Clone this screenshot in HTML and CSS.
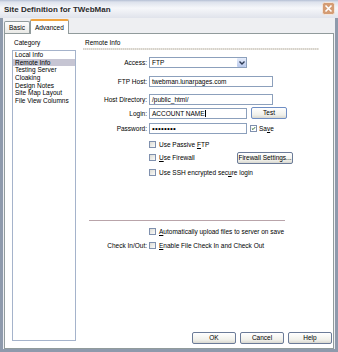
FILE: index.html
```html
<!DOCTYPE html>
<html lang="en">
<head>
    <meta charset="UTF-8">
    <title>Site Definition for TWebMan</title>
    <link rel="stylesheet" href="styles.css">
</head>
<body>
    <div class="window">
        <div class="titlebar">
            <span class="title">Site Definition for TWebMan</span>
            <span class="close">
                <svg width="13" height="13" viewBox="0 0 13 13">
                    <rect x="0.5" y="0.5" width="12" height="12" rx="2" fill="#d49c74" stroke="#f4e6dc"/>
                    <path d="M3.5 3.5 L9.5 9.5 M9.5 3.5 L3.5 9.5" stroke="#fff" stroke-width="1.6"/>
                </svg>
            </span>
        </div>
        <div class="frame">
            <div class="tabs">
                <span class="tab">Basic</span>
                <span class="tab active">Advanced</span>
            </div>
            <div class="panel">
                <!-- Category column -->
                <div class="side">
                    <div class="heading">Category</div>
                    <ul class="list">
                        <li>Local Info</li>
                        <li class="selected">Remote Info</li>
                        <li>Testing Server</li>
                        <li>Cloaking</li>
                        <li>Design Notes</li>
                        <li>Site Map Layout</li>
                        <li>File View Columns</li>
                    </ul>
                </div>

                <!-- Remote Info section -->
                <div class="main">
                    <div class="heading">Remote Info</div>
                    <div class="rule"></div>

                    <div class="row row-access">
                        <span class="lbl">Access:</span>
                        <span class="select">
                            <span class="select-text">FTP</span>
                            <span class="arrow">
                                <svg width="8" height="8" viewBox="0 0 8 8">
                                    <path d="M1.5 2.5 L4 5 L6.5 2.5" fill="none" stroke="#2d3b55" stroke-width="1.4"/>
                                </svg>
                            </span>
                        </span>
                    </div>
                    <div class="row row-host">
                        <span class="lbl">FTP Host:</span>
                        <span class="field wide">twebman.lunarpages.com</span>
                    </div>
                    <div class="row row-dir">
                        <span class="lbl">Host Directory:</span>
                        <span class="field wide">/public_html/</span>
                    </div>
                    <div class="row row-login">
                        <span class="lbl">Login:</span>
                        <span class="field">ACCOUNT NAME<span class="caret"></span></span>
                        <span class="btn btn-test">Test</span>
                    </div>
                    <div class="row row-pass">
                        <span class="lbl">Password:</span>
                        <span class="field dots">&bull;&bull;&bull;&bull;&bull;&bull;&bull;&bull;</span>
                        <span class="check check-save">
                            <span class="box">
                                <svg width="7" height="7" viewBox="0 0 7 7">
                                    <path d="M1.2 3.4 L2.8 5 L5.8 1.6" fill="none" stroke="#1f5f1f" stroke-width="1.3"/>
                                </svg>
                            </span>
                            <span>Sa<u>v</u>e</span>
                        </span>
                    </div>

                    <div class="opt opt-passive">
                        <span class="box"></span>
                        <span>Use Passive <u>F</u>TP</span>
                    </div>
                    <div class="opt opt-firewall">
                        <span class="opt-label"><span class="box"></span><span><u>U</u>se Firewall</span></span>
                        <span class="btn btn-firewall">Firewall Settings...</span>
                    </div>
                    <div class="opt opt-ssh">
                        <span class="box"></span>
                        <span>Use SSH encrypted sec<u>u</u>re login</span>
                    </div>

                    <div class="sep"></div>

                    <div class="opt opt-auto">
                        <span class="box"></span>
                        <span><u>A</u>utomatically upload files to server on save</span>
                    </div>
                    <div class="row row-checkin">
                        <span class="lbl">Check In/Out:</span>
                        <span class="box"></span>
                        <span><u>E</u>nable File Check In and Check Out</span>
                    </div>

                    <div class="buttons">
                        <span class="btn btn-ok">OK</span>
                        <span class="btn">Cancel</span>
                        <span class="btn">Help</span>
                    </div>
                </div>
            </div>
        </div>
    </div>
</body>
</html>
```

FILE: styles.css
```css
body {
    margin: 0;
    font-family: "Liberation Sans", Arial, sans-serif;
    font-size: 6.5px;
    color: #000;
    background-color: #fff;
}
.window {
    width: 338px;
    height: 352px;
    display: flex;
    flex-direction: column;
}
.titlebar {
    height: 18px;
    flex-shrink: 0;
    display: flex;
    align-items: center;
    justify-content: space-between;
    padding: 0 3px 0 4px;
    background: linear-gradient(#b4bfd4 0, #dde2ec 2px, #f6f7fa 45%, #e0e3eb 100%);
}
.title {
    font-size: 8px;
    font-weight: bold;
    color: #2a2a2a;
}
.close {
    display: flex;
    margin-top: -1px;
}
.frame {
    flex: 1;
    display: flex;
    flex-direction: column;
    border: 3px solid #8e9aac;
    border-top: none;
    background-color: #eeeff2;
}
.tabs {
    height: 15px;
    flex-shrink: 0;
    display: flex;
    align-items: flex-end;
    padding-left: 1px;
}
.tab {
    height: 11px;
    line-height: 11px;
    padding: 0 4px;
    border: 1px solid #919b9c;
    border-bottom: none;
    border-radius: 2px 2px 0 0;
    background: linear-gradient(#fdfdfd, #e9e9e6);
}
.tab.active {
    height: 13px;
    line-height: 13px;
    border-top: 2px solid #f0a33e;
    background: #fff;
    position: relative;
    top: 1px;
}
.panel {
    flex: 1;
    display: grid;
    grid-template-columns: 64px 1fr;
    column-gap: 7px;
    margin: 0 1px;
    padding: 5px 1px 4px 7px;
    border: 1px solid #919b9c;
    background-color: #fff;
}
.heading {
    height: 8px;
    line-height: 8px;
    padding-left: 2px;
}
.side {
    display: flex;
    flex-direction: column;
}
.list {
    flex: 1;
    list-style: none;
    margin: 3px 0 3px 0;
    padding: 0;
    border: 1px solid #a5b3cb;
}
.list li {
    height: 7.7px;
    line-height: 7.7px;
    padding-left: 2px;
}
.list li.selected {
    background-color: #c6c5d3;
}
.main {
    display: flex;
    flex-direction: column;
}
.rule {
    width: 236px;
    height: 2px;
    margin-top: 1px;
    background: repeating-linear-gradient(90deg, #d6d2ca 0 1px, #e8e5df 1px 2px);
}
.row {
    display: flex;
    align-items: center;
}
.lbl {
    width: 64px;
    margin-right: 2px;
    text-align: right;
}
.field {
    width: 98px;
    height: 11px;
    line-height: 9px;
    box-sizing: border-box;
    padding-left: 2px;
    border: 1px solid #8ca0bc;
    background-color: #fff;
    white-space: nowrap;
}
.field.wide {
    width: 124px;
}
.dots {
    font-size: 8px;
    letter-spacing: 0.2px;
}
.caret {
    display: inline-block;
    width: 1px;
    height: 7px;
    background-color: #000;
    vertical-align: -1px;
}
.select {
    width: 98px;
    height: 11px;
    box-sizing: border-box;
    display: flex;
    align-items: center;
    justify-content: space-between;
    border: 1px solid #8ca0bc;
    background-color: #fff;
}
.select-text {
    padding-left: 2px;
}
.arrow {
    width: 9px;
    height: 9px;
    display: flex;
    align-items: center;
    justify-content: center;
    border-radius: 1px;
    background: linear-gradient(#e6edfb, #b9c9ec);
}
.btn {
    height: 12px;
    line-height: 10px;
    box-sizing: border-box;
    text-align: center;
    border: 1px solid #6b7b98;
    border-radius: 2px;
    background: linear-gradient(#ffffff, #f0f0ea 70%, #d9d8d0);
}
.btn-test {
    width: 36px;
    margin-left: 4px;
    border-color: #6f8ec4;
}
.check {
    display: flex;
    align-items: center;
    gap: 2px;
}
.check-save {
    margin-left: 3px;
}
.box {
    width: 7px;
    height: 7px;
    box-sizing: border-box;
    flex-shrink: 0;
    display: inline-flex;
    align-items: center;
    justify-content: center;
    border: 1px solid #7f90ae;
    background: linear-gradient(135deg, #dcdcd6, #fbfbf9);
    margin-right: 3px;
}
.check-save .box {
    margin-right: 0;
    background: #fff;
}
.opt {
    display: flex;
    align-items: center;
    padding-left: 66px;
    height: 7px;
}
.opt-label {
    width: 88px;
    display: flex;
    align-items: center;
}
.btn-firewall {
    width: 56px;
}
.row-access { height: 11px; margin-top: 7px; }
.row-host { height: 11px; margin-top: 8px; }
.row-dir { height: 11px; margin-top: 7px; }
.row-login { height: 12px; margin-top: 2px; }
.row-pass { height: 12px; margin-top: 3px; }
.opt-passive { margin-top: 7px; }
.opt-firewall { height: 11px; margin-top: 4px; }
.opt-ssh { margin-top: 6px; }
.sep {
    width: 196px;
    height: 1px;
    margin: 44px 0 0 6px;
    background-color: #b9a4aa;
}
.opt-auto { margin-top: 7px; }
.row-checkin {
    height: 8px;
    margin-top: 6px;
}
.buttons {
    margin-top: auto;
    display: flex;
    justify-content: flex-end;
    gap: 4px;
}
.buttons .btn {
    width: 44px;
}
```
